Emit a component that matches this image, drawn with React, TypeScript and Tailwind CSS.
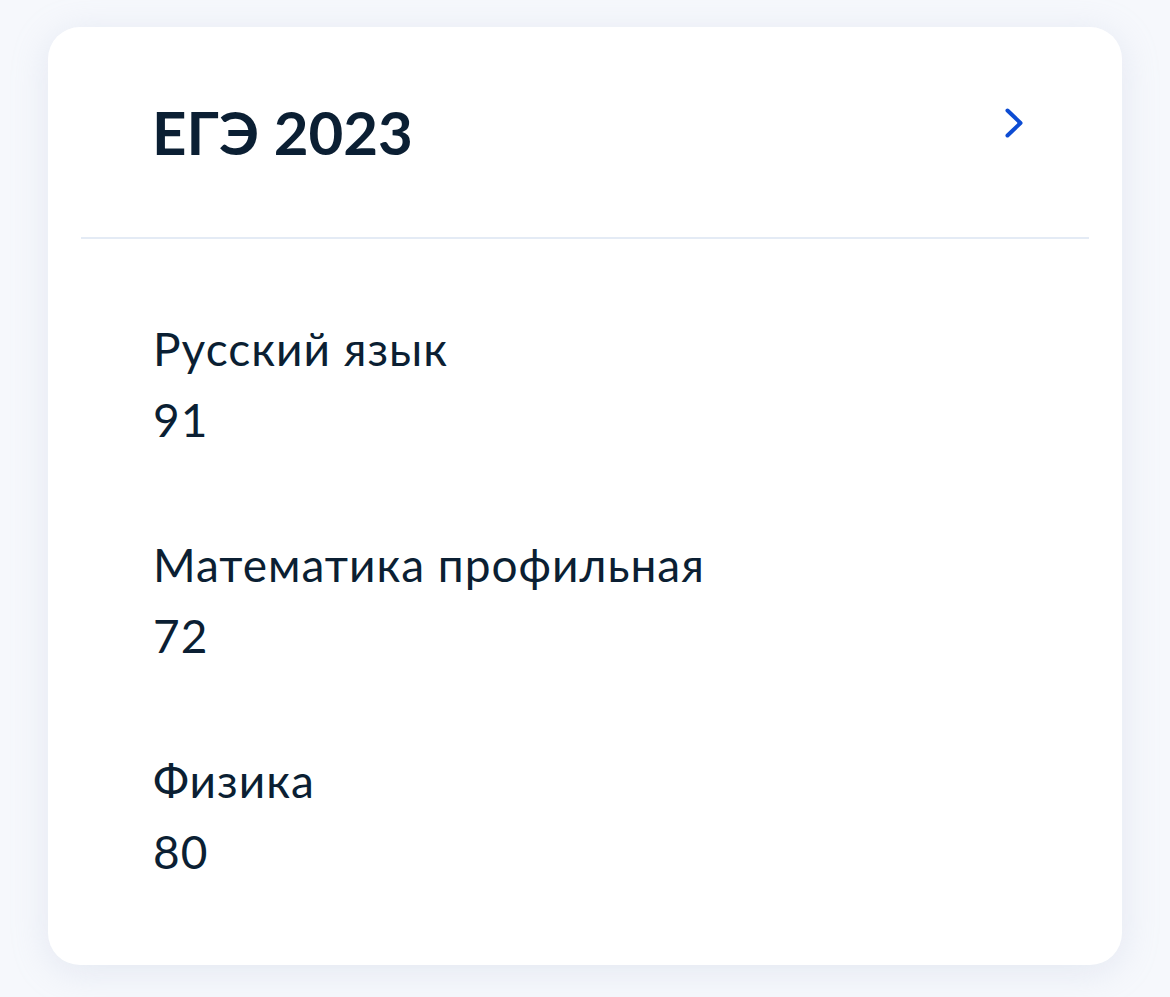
import React from 'react';

type Result = {
  subject: string;
  score: number;
};

const results: Result[] = [
  { subject: 'Русский язык', score: 91 },
  { subject: 'Математика профильная', score: 72 },
  { subject: 'Физика', score: 80 },
];

function ChevronRight() {
  return (
    <svg width="18" height="30" viewBox="0 0 18 30" fill="none">
      <path
        d="M2.5 2.5 L15.5 15 L2.5 27.5"
        stroke="#0d4cd3"
        strokeWidth="4"
        strokeLinecap="round"
        strokeLinejoin="round"
      />
    </svg>
  );
}

export default function App() {
  return (
    <div
      className="min-h-[997px] bg-[#f6f8fc] px-[48px] pt-[27px] pb-[32px] text-[#0b1f33]"
      style={{ fontFamily: 'Lato, "Noto Sans", sans-serif' }}
    >
      <div className="h-[938px] rounded-[32px] bg-white px-[33px] shadow-[0_6px_36px_rgba(180,190,215,0.28)]">
        <div className="flex items-start justify-between pl-[71px] pr-[66px] pt-[69px] pb-[69px]">
          <h1 className="text-[60px] font-bold leading-[72px]">ЕГЭ 2023</h1>
          <button className="mt-[12px]">
            <ChevronRight />
          </button>
        </div>
        <div className="h-[2px] bg-[#e4ebf5]" />
        <div className="flex flex-col gap-[74px] pl-[72px] pt-[74px]">
          {results.map((r) => (
            <div key={r.subject} className="text-[46px] leading-[71px] tracking-[1px]">
              <div>{r.subject}</div>
              <div>{r.score}</div>
            </div>
          ))}
        </div>
      </div>
    </div>
  );
}
